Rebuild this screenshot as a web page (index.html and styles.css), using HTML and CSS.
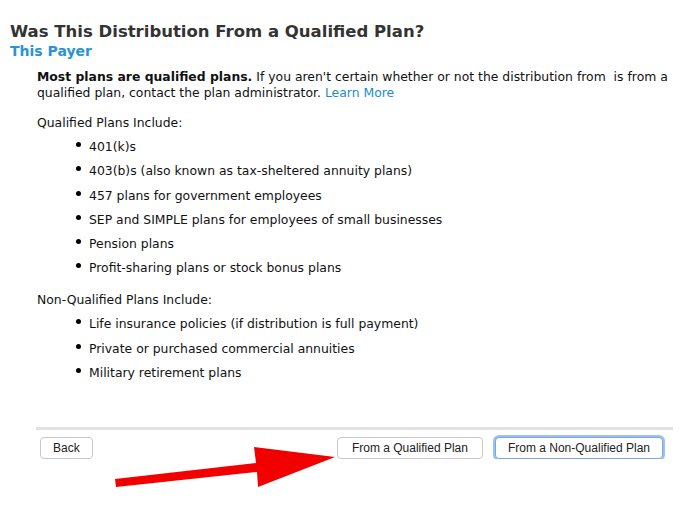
FILE: index.html
```html
<!DOCTYPE html>
<html lang="en">
<head>
  <meta charset="UTF-8" />
  <title>Qualified Plan</title>
  <link rel="stylesheet" href="styles.css">
</head>
<body>
  <div class="page">
    <h1 class="title">Was This Distribution From a Qualified Plan?</h1>
    <div class="subtitle">This Payer</div>

    <div class="content">
      <p class="intro"><strong>Most plans are qualified plans.</strong> If you aren't certain whether or not the distribution from &nbsp;is from a qualified plan, contact the plan administrator. <a href="#" class="learn">Learn More</a></p>

      <div class="group-label">Qualified Plans Include:</div>
      <ul class="plan-list">
        <li>401(k)s</li>
        <li>403(b)s (also known as tax-sheltered annuity plans)</li>
        <li>457 plans for government employees</li>
        <li>SEP and SIMPLE plans for employees of small businesses</li>
        <li>Pension plans</li>
        <li>Profit-sharing plans or stock bonus plans</li>
      </ul>

      <div class="group-label second">Non-Qualified Plans Include:</div>
      <ul class="plan-list">
        <li>Life insurance policies (if distribution is full payment)</li>
        <li>Private or purchased commercial annuities</li>
        <li>Military retirement plans</li>
      </ul>
    </div>

    <div class="footer">
      <button class="btn">Back</button>
      <div class="spacer"></div>
      <button class="btn wide">From a Qualified Plan</button>
      <button class="btn focused">From a Non-Qualified Plan</button>
    </div>
  </div>

  <!-- annotation arrow -->
  <svg class="arrow" width="683" height="528" viewBox="0 0 683 528">
    <polygon points="115,479 256,463 254,447 335,457 258,487 257,472 116,487" fill="#f20000" />
  </svg>
</body>
</html>
```

FILE: styles.css
```css
body {
  margin: 0;
  background: #fff;
  font-family: "DejaVu Sans", Verdana, sans-serif;
  color: #111;
}
.page {
  padding: 22px 10px 0 10px;
}
.title {
  font-size: 16.5px;
  font-weight: bold;
  color: #333;
  margin: 0;
  line-height: 20px;
}
.subtitle {
  font-size: 14px;
  font-weight: bold;
  color: #2a93d5;
  line-height: 18px;
}
.content {
  padding: 9px 0 0 27px;
  font-size: 12.4px;
  height: 358px;
}
.intro {
  margin: 0;
  line-height: 16px;
}
.learn {
  color: #1a8ccc;
  text-decoration: none;
}
.group-label {
  margin-top: 14px;
  line-height: 16px;
}
.group-label.second {
  margin-top: 16px;
}
.plan-list {
  margin: 0;
  padding-left: 52px;
  list-style: none;
}
.plan-list li {
  position: relative;
  line-height: 16px;
  margin-top: 8.2px;
}
.plan-list li::before {
  content: "";
  position: absolute;
  left: -13px;
  top: 3px;
  width: 5px;
  height: 5px;
  border-radius: 50%;
  background: #000;
}
.footer {
  margin-left: 26px;
  border-top: 3px solid #e2e2e2;
  padding: 7px 10px 0 4px;
  display: flex;
  align-items: center;
  gap: 12px;
}
.spacer {
  flex: 1;
}
.btn {
  font-family: "Liberation Sans", Arial, sans-serif;
  font-size: 12px;
  color: #222;
  background: #fff;
  border: 1px solid #c8c8c8;
  border-radius: 4px;
  height: 22px;
  padding: 0 12px;
}
.wide {
  padding: 0 14px;
}
.focused {
  border: 1px solid #7aa7e0;
  box-shadow: 0 0 0 2px #9cc0ef;
}
.arrow {
  position: absolute;
  left: 0;
  top: 0;
}
```
